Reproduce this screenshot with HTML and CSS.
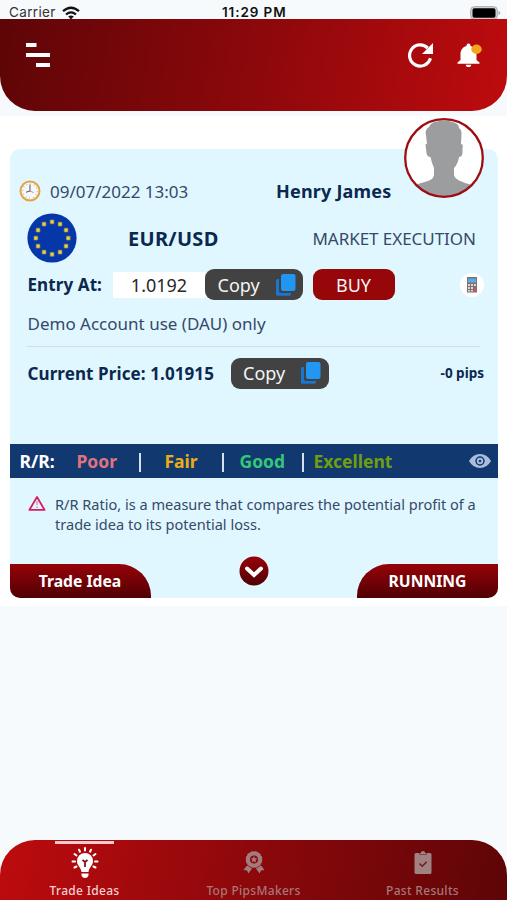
FILE: index.html
```html
<!DOCTYPE html>
<html lang="en">
<head>
<meta charset="utf-8">
<title>Trade Ideas</title>
<link rel="stylesheet" href="styles.css">
</head>
<body>
<svg width="0" height="0" class="defs">
  <symbol id="copy" viewBox="0 0 20 22">
    <path d="M3 5v12a2 2 0 0 0 2 2h10v1.3a1.5 1.5 0 0 1-1.5 1.5h-12A1.5 1.5 0 0 1 0 20.300V6.500A1.500 1.500 0 0 1 1.500 5z" fill="#1976d2"/>
    <rect x="5" y="0" width="14.500" height="17" rx="2" fill="#2196f3"/>
  </symbol>
</svg>
<div class="status">
  <span class="carrier">Carrier</span>
  <svg class="wifi" width="18" height="14" viewBox="0 0 18 14" fill="none" stroke="#111" stroke-width="2.300"><path d="M1 5.200Q9-1.800 17 5.200M4 8.500Q9 4.200 14 8.500"/><path d="M6.200 10.600Q9 8.300 11.800 10.600L9 13.600z" fill="#111" stroke="none"/></svg>
  <span class="time">11:29 PM</span>
  <svg class="battery" width="31" height="14" viewBox="0 0 31 14"><rect x=".7" y=".7" width="26.600" height="12.600" rx="3.500" fill="#d5d7d9" stroke="#a5a8aa"/><rect x="2.500" y="2.300" width="23" height="9.400" rx="1.800" fill="#000"/><path d="M28.500 5v4q1.800-.5 1.800-2t-1.800-2z" fill="#aaa"/></svg>
</div>
<header class="header">
  <svg class="menu" width="25" height="25" viewBox="0 0 25 25" fill="#fff"><path d="M0 0h10.500v4H0zM0 10h24v4H0zM10 20h14v4H10z"/></svg>
  <svg class="refresh" width="26" height="25" viewBox="0 0 26 25"><path d="M22.400 15.300A10.600 10.600 0 1 1 19.700 5" fill="none" stroke="#fff" stroke-width="3.200"/><path d="M25 0v11H14z" fill="#fff"/></svg>
  <svg class="bell" width="25" height="25" viewBox="0 0 25 25"><path d="M11.500.5a2 2 0 0 1 2 2v.4c3.800 1 6 4 6 8v6l3 2.500v1.300H.5v-1.300l3-2.500v-6c0-4 2.200-7 6-8v-.4a2 2 0 0 1 2-2zM8.800 21.700h5.400a2.700 2.400 0 0 1-5.400 0z" fill="#fff"/><ellipse cx="19.500" cy="6.300" rx="5.200" ry="4.700" fill="#f4a51c"/></svg>
</header>
<main class="panel">
  <article class="card">
    <div class="avatar">
      <svg viewBox="0 0 80 80" width="80" height="80"><defs><clipPath id="c"><circle cx="40" cy="40" r="39"/></clipPath></defs><circle cx="40" cy="40" r="39" fill="#fff"/><g clip-path="url(#c)"><path d="M22 17Q20.500 12 25 9Q27 4 33 3.500Q42 1 50 4.500Q55 6 55 10Q58 12 57.500 16L57 26Q59.500 26 58.500 30V35Q58 39 55 39Q54 46 50 50V57C51 62 58 64 68 67V80H8V68C20 63 29 64 30 57V50Q28 46 26.500 39Q23 39 22.500 35L21.500 27Q22 25 23 26z" fill="#9c9d9f"/></g><circle cx="40" cy="40" r="38.800" fill="none" stroke="#9d0e12" stroke-width="2.300"/></svg>
    </div>
    <div class="row meta">
      <svg class="clock" width="22" height="22" viewBox="0 0 22 22"><circle cx="11" cy="11" r="9.500" fill="#f4f8fb" stroke="#e8a33d" stroke-width="2"/><circle cx="11" cy="11" r="7.200" fill="none" stroke="#9aa8b3" stroke-width="1.200" stroke-dasharray=".7 3.070"/><path d="M11 4.500V11L7 12.200" fill="none" stroke="#4b5866"/><path d="M11 11l3.500 1.600" stroke="#e05060" stroke-width=".8"/></svg>
      <span class="date">09/07/2022 13:03</span>
      <strong class="name">Henry James</strong>
    </div>
    <div class="row pair">
      <svg class="flag" width="50" height="50" viewBox="0 0 50 50"><circle cx="25" cy="25" r="24.600" fill="#0637a8"/><path d="M23.200 7h3.700v3.800h-3.700zM31.200 9.200h3.700V13h-3.700zM37.200 15.200h3.700V19h-3.700zM39.400 23.200h3.700V27h-3.700zM37.200 31.200h3.700V35h-3.700zM31.200 37.200h3.700V41h-3.700zM23.200 39.400h3.700v3.800h-3.700zM15.200 37.200h3.700V41h-3.700zM9.200 31.200h3.700V35H9.200zM7 23.200h3.700V27H7zM9.200 15.200h3.700V19H9.200zM15.200 9.200h3.700V13h-3.700z" fill="#efd43c" stroke="#8d8c57" stroke-width=".7"/></svg>
      <strong class="symbol">EUR/USD</strong>
      <span class="execution">MARKET EXECUTION</span>
    </div>
    <div class="row entry">
      <strong class="entry-label">Entry At:</strong>
      <span class="value">1.0192</span>
      <span class="btn copy">Copy<svg width="20" height="22"><use href="#copy"/></svg></span>
      <span class="btn buy">BUY</span>
      <span class="calc"><svg width="12" height="16" viewBox="0 0 12 16"><rect x="1" width="10" height="15.500" fill="#806f6e"/><rect x="2" y="1.500" width="8" height="4" fill="#54aee8"/><path d="M2 7h2v2H2zM5 7h2v2H5zM8 7h2v2H8zM2 10h2v2H2zM5 10h2v2H5zM2 13h2v1.500H2zM5 13h2v1.500H5z" fill="#d5dad8"/><path d="M8 10h2v4.500H8z" fill="#ca5260"/></svg></span>
    </div>
    <p class="demo">Demo Account use (DAU) only</p>
    <div class="row price">
      <strong class="current">Current Price: 1.01915</strong>
      <span class="btn copy">Copy<svg width="20" height="22"><use href="#copy"/></svg></span>
      <strong class="pips">-0 pips</strong>
    </div>
    <div class="ratio">
      <span class="rr">R/R:</span><span class="poor">Poor</span><i class="bar b1"></i><span class="fair">Fair</span><i class="bar b2"></i><span class="good">Good</span><i class="bar b3"></i><span class="excellent">Excellent</span>
      <svg class="eye" width="22" height="14" viewBox="0 0 22 14"><path fill-rule="evenodd" d="M0 7Q4 0 11 0T22 7Q18 14 11 14T0 7zM11 2.300a4.700 4.700 0 1 0 0 9.400a4.700 4.700 0 0 0 0-9.400z" fill="#a9bddb"/><circle cx="11" cy="7" r="3.200" fill="#a9bddb"/><circle cx="11" cy="7" r="1.300" fill="#113970"/></svg>
    </div>
    <div class="note">
      <svg width="18" height="17" viewBox="0 0 18 17"><path d="M9 2L16.600 14.900H1.400z" fill="#eaf5fa" stroke="#d51b68" stroke-width="1.800" stroke-linejoin="round"/><path d="M9 6v4M9 11.500v1.500" stroke="#a78396" stroke-width="1.100"/></svg>
      <p><span class="line">R/R Ratio, is a measure that compares the potential profit of a</span><br><span class="line">trade idea to its potential loss.</span></p>
    </div>
    <div class="foot">
      <span class="tab left"><span>Trade Idea</span></span>
      <svg class="expand" width="30" height="30" viewBox="0 0 30 30"><defs><linearGradient id="g" x2="0" y2="1"><stop stop-color="#960208"/><stop offset="1" stop-color="#500104"/></linearGradient></defs><circle cx="15" cy="15" r="14.500" fill="url(#g)"/><path d="M8 12.500l7 6.500 7-6.500" fill="none" stroke="#fff" stroke-width="4" stroke-linecap="round"/></svg>
      <span class="tab right"><span>RUNNING</span></span>
    </div>
  </article>
</main>
<nav class="nav">
  <a class="item active">
    <svg width="28" height="32" viewBox="0 0 28 32"><g stroke="#fff" stroke-width="2" stroke-linecap="round"><path d="M14 1v2.500M8 2.700l1 2M20 2.700l-1 2M3.500 7l2 1.500M24.500 7l-2 1.500M1.500 14.500H4M26.500 14.500H24M3.500 20.500l2-1M24.500 20.500l-2-1"/></g><path d="M14 6a8 8 0 0 1 8 8c0 5-4 6-4.500 11h-7C10 20 6 19 6 14a8 8 0 0 1 8-8zM10.500 26.500h7v2q-1 2.500-3.500 2.500t-3.500-2.500z" fill="#fff"/><path d="M11.500 13l2.500 2 2.500-2M14 15v5" fill="none" stroke="#8b1015" stroke-width="1.800"/></svg>
    <span>Trade Ideas</span>
  </a>
  <a class="item makers">
    <svg width="22" height="24" viewBox="0 0 22 24"><circle cx="11" cy="8.500" r="6" fill="none" stroke="#a47b7d" stroke-width="4"/><circle cx="11" cy="8.500" r="7.600" fill="none" stroke="#a47b7d" stroke-width="1.400" stroke-dasharray="3 1"/><path d="M11 5l1 2.300 2.500.2-2 1.600.7 2.400-2.200-1.300-2.200 1.300.7-2.400-2-1.600 2.500-.2zM4 14.500l5 3-3.500 5-1.500-3-3.500-.5zM18 14.500l-5 3 3.500 5 1.500-3 3.500-.5z" fill="#a47b7d"/></svg>
    <span>Top PipsMakers</span>
  </a>
  <a class="item results">
    <svg width="18" height="24" viewBox="0 0 18 24"><path d="M2 2h3.500v2h7V2H16q1.500 0 1.500 1.500v18Q17.500 23 16 23H2Q.5 23 .5 21.500v-18Q.5 2 2 2zM7 1q2-2 4 0v1h1v1.500H6V2h1z" fill="#9f8281"/><path d="M5.500 12.500l2.700 2.700 4.500-4.500" fill="none" stroke="#74191a" stroke-width="1.500"/></svg>
    <span>Past Results</span>
  </a>
</nav>
</body>
</html>
```

FILE: styles.css
```css
* { box-sizing: border-box; }
body { margin: 0; width: 507px; height: 900px; display: flex; flex-direction: column; overflow: hidden; background: #f6fafd; font-family: "Noto Sans", sans-serif; color: #0b2850; }
p { margin: 0; }
svg { display: block; flex: none; }
span, strong { white-space: nowrap; }
.defs { position: absolute; }
.status { height: 19px; flex: none; display: flex; font-family: Inter, sans-serif; font-size: 13.500px; line-height: 13px; color: #333; }
.carrier { width: 47px; margin: 6px 0 0 9px; letter-spacing: .35px; }
.wifi { margin: 6px 0 0 6px; }
.time { width: 66px; margin: 6px 0 0 142px; font-weight: 600; letter-spacing: .9px; color: #111; }
.battery { margin: 6px 0 0 182px; }
.header { height: 91.500px; flex: none; display: flex; border-radius: 0 0 35px 35px; background: linear-gradient(100deg, #5e0507, #8c080b 50%, #bd0b0e); }
.menu { margin: 24px 0 0 26px; }
.refresh { margin: 24px 0 0 357px; }
.bell { margin: 24px 0 0 23px; }
.panel { height: 490.500px; flex: none; margin-top: 5px; padding: 33px 9px 0 9.500px; background: #fff; }
.card { position: relative; height: 449.500px; border-radius: 10px; background: #e0f7ff; display: flex; flex-direction: column; }
.avatar { position: absolute; right: 14px; top: -31px; }
.row { display: flex; align-items: center; flex: none; }
.meta { height: 24px; margin-top: 30.500px; }
.clock { margin-left: 9px; }
.date { width: 140px; margin-left: 9.500px; font-size: 17px; color: #354968; }
.name { margin-left: 86px; font-size: 18px; letter-spacing: .2px; }
.pair { height: 50px; margin-top: 9.500px; }
.flag { margin-left: 17.500px; }
.symbol { width: 92px; margin: 1px 0 0 51px; font-size: 20px; letter-spacing: .3px; }
.execution { margin: 1px 0 0 92.500px; font-size: 17px; letter-spacing: -.05px; color: #354968; }
.entry { height: 31px; margin-top: 6.500px; }
.entry-label { width: 74px; margin-left: 18px; font-size: 17px; letter-spacing: .1px; }
.value { width: 92px; height: 26px; margin-left: 11.500px; line-height: 27px; text-align: center; background: #fff; color: #282828; font-size: 18px; }
.btn { height: 31px; display: flex; align-items: center; border-radius: 9px; color: #f5f5f5; font-size: 18px; }
.copy { width: 98px; padding: 0 7.500px 0 12.500px; justify-content: space-between; background: #424242; }
.buy { width: 82px; margin-left: 9.500px; justify-content: center; background: #970608; }
.calc { width: 24px; height: 24px; margin-left: 65px; border-radius: 50%; display: grid; place-items: center; background: #fff; }
.demo { height: 46.500px; margin: 0 18px 0 17.500px; flex: none; border-bottom: 1px solid #cfdee8; line-height: 47px; padding-left: .5px; font-size: 17px; color: #354968; }
.price { height: 31px; margin-top: 11px; }
.current { width: 186px; margin: 1px 0 0 18px; font-size: 17px; letter-spacing: .1px; }
.price .copy { margin-left: 17px; }
.pips { margin-left: auto; margin-right: 14px; font-size: 13.500px; }
.ratio { height: 34px; margin-top: 55px; flex: none; display: flex; align-items: center; background: #113970; color: #fff; font-size: 17.500px; font-weight: 700; }
.rr { width: 34px; margin-left: 10px; }
.poor { width: 40px; margin-left: 23px; color: #df737f; }
.fair { width: 33px; margin-left: 24px; color: #e9ae16; }
.good { width: 45px; margin-left: 16px; color: #34c779; }
.excellent { width: 77px; margin-left: 10px; color: #709e0e; }
.bar { width: 2px; height: 19px; margin-top: 3px; background: #d7e1ee; }
.b1 { margin-left: 22px; }
.b2 { margin-left: 24px; }
.b3 { margin-left: 17px; }
.eye { margin: 0 7px 0 auto; }
.note { display: flex; flex: none; height: 86px; padding-top: 16px; }
.note svg { margin: 1px 0 0 18px; }
.note p { margin-left: 9.500px; font-size: 14.550px; line-height: 20px; color: #354968; }
.foot { height: 34px; flex: none; display: flex; justify-content: space-between; }
.tab { width: 141px; height: 34px; display: grid; place-items: center; background: linear-gradient(#960208, #500104); color: #fff; font-size: 15.700px; font-weight: 700; }
.tab span { margin-top: 1px; }
.left { border-radius: 0 32px 0 10px; }
.right { border-radius: 32px 0 10px 0; }
.expand { margin-top: -8px; }
.nav { height: 60px; flex: none; margin-top: auto; display: grid; grid-template-columns: repeat(3, 1fr); border-radius: 35px 35px 0 0; background: linear-gradient(100deg, #bd0b0e, #8c080b 50%, #5e0507); }
.item { display: flex; flex-direction: column; align-items: center; justify-content: space-between; padding: 11px 0 1px; font-size: 12px; font-weight: 500; letter-spacing: .3px; line-height: 17px; color: #a87779; }
.active { padding-top: 1px; color: #f6cfd0; }
.active::before { content: ""; width: 59px; height: 3px; background: #f3c9cb; }
```
